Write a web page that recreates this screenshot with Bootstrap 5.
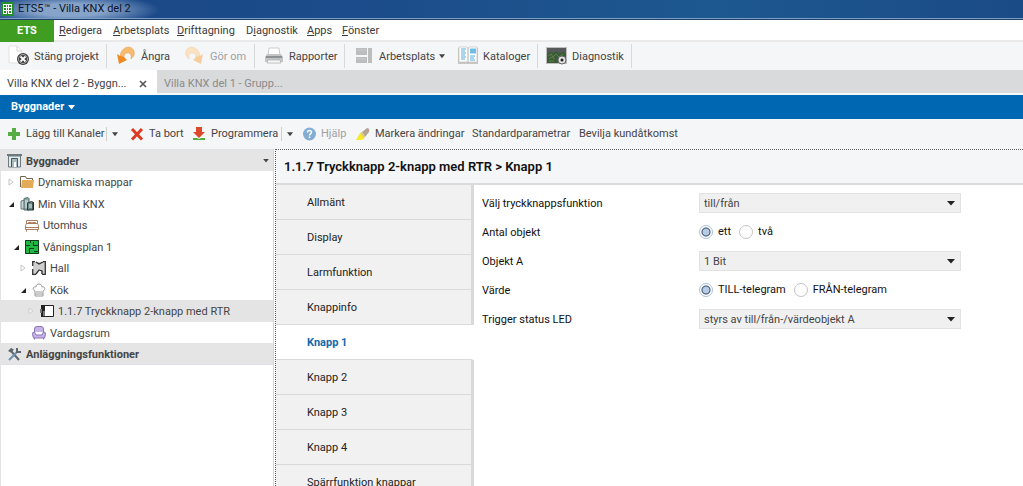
<!DOCTYPE html>
<html lang="sv">
<head>
<meta charset="utf-8">
<meta name="viewport" content="width=device-width, initial-scale=1">
<title>ETS5™ - Villa KNX del 2</title>
<link href="https://cdn.jsdelivr.net/npm/bootstrap@5.3.0/dist/css/bootstrap.min.css" rel="stylesheet">
<style>
  :root { --ets-text: #444; --ets-bar: #f5f6f8; --ets-line: #d9d9d9; }
  body { font-family: Roboto, "Liberation Sans", sans-serif; font-size: 11px; line-height: 16px; color: var(--ets-text); background: #fff; }
  button, select, input { font-family: inherit; }
  svg { display: block; flex: none; }
  a { color: inherit; text-decoration: none; }

  .title-bar { height: 20px; padding: 0 0 1px 1px; gap: 4px; color: #0b1424; background: radial-gradient(ellipse 90px 16px at 70px 10px, #86a3c9 40%, transparent 100%), linear-gradient(90deg, #1b4787 0, #1c4c8b 35%, #1d588f 70%, #1b4b87 100%); border-bottom: 1px solid #1d3f68; box-shadow: inset 0 -1px #7d9fc6; }

  .menu-bar { display: grid; grid-template-columns: 54px 54px 64px 69px 61px 35px auto; height: 20px; }
  .menu-bar > * { padding: 0 5px; line-height: 22px; border: 0; background: none; text-align: left; color: #3a3a3a; white-space: nowrap; }
  .menu-bar .ets-menu { background: #3f9e22; color: #fff; font-weight: 700; text-align: center; }

  .tool { display: flex; align-items: center; height: 100%; border: 0; background: none; color: var(--ets-text); text-align: left; white-space: nowrap; padding: 0 0 0 8px; gap: 4px; }
  .tool:disabled { color: #a0a0a0; }
  .tool-end { border-right: 1px solid var(--ets-line); }
  .main-tools { display: grid; grid-template-columns: 107px 69px 79px 90px 104px 89px 94px; height: 30px; padding: 2px 0; background: var(--ets-bar); border-top: 2px solid #e9e9e9; line-height: 18px; }
  .main-tools .tool { padding-top: 2px; }
  .main-tools .tool svg { margin-top: -2px; }

  .doc-tabs { height: 25px; background: #d9dadc; border-bottom: 2px solid #f4f9fc; }
  .doc-tab { border: 0; background: none; color: #8a8a8a; padding: 2px 10px 0 7px; line-height: 23px; height: 25px; text-align: left; }
  .doc-tab.active { width: 157px; background: #fff; color: #444; }
  .panel-title { height: 24px; background: #0068b2; color: #fff; padding: 0 11px; }
  .panel-title button { border: 0; background: none; color: inherit; padding: 0; gap: 4px; line-height: 26px; height: 24px; font-weight: 700; }

  .action-bar { display: grid; grid-template-columns: 106px 17px 62px 96px 14px 54px 118px 107px auto; height: 30px; padding: 3px 0; background: var(--ets-bar); }
  .action-bar .tool { padding-left: 5px; gap: 5px; height: 24px; }
  .action-bar .split { height: 14px; margin-top: 5px; border-left: 1px solid #cfcfcf; }

  .side-panel { width: 274px; border-left: 1px solid #e4e4e4; border-right: 1px solid #d6d6d6; flex: none; }
  .tree-row { height: 22px; padding-top: 2px; gap: 4px; color: var(--ets-text); }
  .tree-row:nth-child(odd) { height: 21px; }
  .tree-row:first-child { height: 22px; }
  .tree-row svg { margin-top: -2px; }
  .tree-section { background: #e5e5e5; font-weight: 700; padding-left: 6px; padding-right: 4px; }
  .tree-row.selected { background: #e4e4e4; }
  .level-1 { padding-left: 6px; }
  .level-2 { padding-left: 11px; }
  .level-3 { padding-left: 18px; }
  .level-4 { padding-left: 26px; }
  .tree-row > svg + svg { margin-left: 1px; }

  .device-panel { border-left: 1px dotted #555; border-top: 1px dotted #555; margin-left: 1px; min-width: 0; }
  .device-title { height: 35px; background: var(--ets-bar); border-bottom: 2px solid #dadbdd; padding: 0 8px; line-height: 34px; font-size: 13px; font-weight: 600; color: #111; margin: 0; white-space: nowrap; }
  .param-nav { width: 198px; flex: none; }
  .param-nav a { display: block; height: 35px; padding-left: 31px; line-height: 36px; color: #222; background: #f1f1f1; border-right: 3px solid #d9d9da; border-bottom: 1px solid var(--ets-line); }
  .param-nav a.active { background: #fff; border-right-color: #fff; color: #1268ae; font-weight: 700; }

  .param-form { display: grid; grid-template-columns: 217px minmax(0, 262px); grid-auto-rows: 20px; row-gap: 9px; padding: 8px; align-content: start; color: #111; }
  .param-form .name { line-height: 22px; }
  .param-form .form-select { height: 20px; padding: 1px 24px 0 4px; border: 1px solid #e2e2e2; border-radius: 0; font-size: 11px; line-height: 18px; color: #444; background: #f0f0f0 url("data:image/svg+xml,%3Csvg xmlns='http://www.w3.org/2000/svg' width='8' height='5'%3E%3Cpath d='M0 0h8L4 4.500z' fill='%23222'/%3E%3C/svg%3E") no-repeat right 5px center / 8px 5px; }
  .choices { display: flex; align-items: center; gap: 8px; }
  .choices label { display: flex; align-items: center; gap: 5px; line-height: 22px; height: 20px; }
  .choices input { appearance: none; width: 14px; height: 14px; margin: 0; border: 1px solid #c4c4c4; border-radius: 50%; background: #fff; }
  .choices input:checked { border-color: #a9bfd8; background: radial-gradient(circle, #b5cbe6 0 3px, #3a5069 4px, #fff 5px); }
</style>
</head>
<body>
<svg class="d-none" aria-hidden="true">
  <symbol id="caret" viewBox="0 0 7 5"><path d="M0 0h7L3.500 4.500z" fill="currentColor"/></symbol>
  <symbol id="closed" viewBox="0 0 8 8"><path d="M2 1l4 3-4 3z" fill="#fff" stroke="#c4c4c4"/></symbol>
  <symbol id="open" viewBox="0 0 8 8"><path d="M7 2v5H2z" fill="#222"/></symbol>
</svg>

<div class="vh-100 overflow-hidden d-flex flex-column">
  <header>
    <div class="title-bar d-flex align-items-center">
      <svg width="13" height="16" viewBox="0 0 13 16"><path d="M0 1h13v14H0z" fill="#23902d"/><path d="M2 3h9v10H2z" fill="#fff"/><path d="M3 4h2v2H3zM6 4h1v2H6zM8 4h2v2H8zM3 7h2v2H3zM6 7h1v2H6zM8 7h2v2H8zM3 10h2v2H3zM6 10h1v3H6zM8 10h2v2H8z" fill="#23902d"/></svg>
      <span>ETS5™ - Villa KNX del 2</span>
    </div>
    <nav class="menu-bar">
      <button type="button" class="ets-menu">ETS</button>
      <a href="#"><u>R</u>edigera</a><a href="#"><u>A</u>rbetsplats</a><a href="#"><u>D</u>rifttagning</a><a href="#">D<u>i</u>agnostik</a><a href="#"><u>A</u>pps</a><a href="#"><u>F</u>önster</a>
    </nav>
    <div class="main-tools" role="toolbar">
      <button type="button" class="tool tool-end">
        <svg width="22" height="22" viewBox="0 0 22 22"><path d="M1 1h8l5 5v12H1z" fill="#fff" stroke="#e2e2e2"/><path d="M9 1v5h5" fill="none" stroke="#d5d5d5"/><circle cx="15" cy="14" r="6" fill="#3d3d3d"/><circle cx="15" cy="14" r="4.500" fill="none" stroke="#aaa"/><path d="M12.500 11.500l5 5m0-5l-5 5" stroke="#fff" stroke-width="1.800"/></svg>
        Stäng projekt</button>
      <button type="button" class="tool">
        <svg width="22" height="22" viewBox="0 0 22 22"><path d="M5 11C6 5 10 2 14 2c4 1 6 4 5 8-1 2-2 3-3 4 1-4-1-7-4-6-2 0-3 2-3 4z" fill="#f7bb6b" stroke="#e3a055" stroke-width=".6"/><path d="M2 9l3 2 4 1 3 3-8 4z" fill="#ee8a24"/></svg>
        Ångra</button>
      <button type="button" class="tool tool-end" disabled>
        <svg width="22" height="22" viewBox="0 0 22 22"><g transform="matrix(-1 0 0 1 21 0)"><path d="M5 11C6 5 10 2 14 2c4 1 6 4 5 8-1 2-2 3-3 4 1-4-1-7-4-6-2 0-3 2-3 4z" fill="#fae1c0" stroke="#efd2ae" stroke-width=".6"/><path d="M2 9l3 2 4 1 3 3-8 4z" fill="#f6cd9d"/></g></svg>
        Gör om</button>
      <button type="button" class="tool tool-end">
        <svg width="22" height="22" viewBox="0 0 22 22"><path d="M6 3h10l1 8H5z" fill="#fff" stroke="#ccc"/><path d="M4 9h14l2 3v5H2v-5z" fill="#c3c5c7"/><path d="M3 11h16v2H3z" fill="#8e9194"/><path d="M5 15h12l1 3H4z" fill="#f7f7f7" stroke="#aaa" stroke-width=".7"/></svg>
        Rapporter</button>
      <button type="button" class="tool">
        <svg width="22" height="22" viewBox="0 0 22 22"><path d="M3 3h11v7H3zM3 12h11v6H3zM15 3h4v15h-4z" fill="#bdbdbd"/><path d="M4 5h9M4 14h9" stroke="#ccc"/></svg>
        Arbetsplats<svg width="6" height="5"><use href="#caret"/></svg></button>
      <button type="button" class="tool tool-end">
        <svg width="22" height="22" viewBox="0 0 22 22"><path d="M1 3h20v16H1z" fill="#c8c8c4"/><path d="M2 2h8l1 1 1-1h8v15h-8l-1 1-1-1H2z" fill="#fff" stroke="#b9b9b9" stroke-width=".6"/><path d="M11 3v15" stroke="#aaa"/><path d="M4 4h5M4 6h4M4 8h5M4 10h4M4 12h5M4 14h4M13 11h5M13 13h4M13 15h5" stroke="#53aada"/><path d="M13 3.500h6v5h-6z" fill="#70bde8"/></svg>
        Kataloger</button>
      <button type="button" class="tool tool-end">
        <svg width="22" height="22" viewBox="0 0 22 22"><path d="M0 2h21v17H0z" fill="#bdbdbd"/><path d="M1 3h19v15H1z" fill="#55595a"/><path d="M1 9l3-2 3 1 3-2 4 2 3-1 3 1v10H1z" fill="#3c5c35"/><path d="M2 11l3-2 2 3 3-3 3 3 4-3M3 14l3-2 3 2M3 16h5" fill="none" stroke="#6b8a5c" stroke-width=".7"/><circle cx="16" cy="15" r="4" fill="#e2e2e2" stroke="#666"/><circle cx="16" cy="15" r="1.500" fill="#222"/></svg>
        Diagnostik</button>
    </div>
    <div class="doc-tabs d-flex">
      <div class="doc-tab active d-flex align-items-center justify-content-between"><span>Villa KNX del 2 - Byggn...</span>
        <button type="button" class="border-0 bg-transparent p-0" aria-label="Stäng flik"><svg width="8" height="8" viewBox="0 0 8 8"><path d="M1 1l6 6m0-6L1 7" stroke="#555" stroke-width="1.600"/></svg></button></div>
      <button type="button" class="doc-tab">Villa KNX del 1 - Grupp...</button>
    </div>
    <div class="panel-title"><button type="button" class="d-flex align-items-center">Byggnader <svg width="7" height="5"><use href="#caret"/></svg></button></div>
    <div class="action-bar" role="toolbar">
      <button type="button" class="tool"><svg width="16" height="16" viewBox="0 0 16 16"><path d="M7 2h4v4h4v4h-4v4H7v-4H3V6h4z" fill="#55ad43"/></svg>Lägg till Kanaler</button>
      <button type="button" class="tool split" aria-label="Fler kanalval"><svg width="6" height="5"><use href="#caret"/></svg></button>
      <button type="button" class="tool"><svg width="16" height="16" viewBox="0 0 16 16"><path d="M4 3l10 10.500M14 3L4 13.500" stroke="#dc3a23" stroke-width="3"/></svg>Ta bort</button>
      <button type="button" class="tool"><svg width="16" height="16" viewBox="0 0 16 16"><path d="M6 1h6v5h3l-6 6-6-6h3z" fill="#dc4a2b"/><path d="M3 12h4l2 1 2-1h4v2H3z" fill="#54ae3b"/></svg>Programmera</button>
      <button type="button" class="tool split" aria-label="Fler programmeringsval"><svg width="6" height="5"><use href="#caret"/></svg></button>
      <button type="button" class="tool" disabled><svg width="16" height="16" viewBox="0 0 16 16"><circle cx="9.500" cy="8" r="6.500" fill="#84add4"/><path d="M7.500 6.500c0-3 4.500-2.500 4 0-.2 1.200-2 1.300-2 3m0 1v1.500" fill="none" stroke="#fff" stroke-width="1.500"/></svg>Hjälp</button>
      <button type="button" class="tool"><svg width="16" height="16" viewBox="0 0 16 16"><path d="M8 6l5-4q3 0 2 4l-4 5z" fill="#b2a596"/><path d="M6 7l2-1 3 5-2 2z" fill="#dfcf68"/><path d="M2 14l4-7 4 6-3 1z" fill="#f6ea28"/></svg>Markera ändringar</button>
      <button type="button" class="tool">Standardparametrar</button>
      <button type="button" class="tool">Bevilja kundåtkomst</button>
    </div>
  </header>

  <main class="d-flex flex-grow-1 overflow-hidden">
    <aside class="side-panel" role="tree">
      <div class="tree-row tree-section d-flex align-items-center border-top">
        <svg width="15" height="15" viewBox="0 0 15 15"><path d="M0 1h15v2H0z" fill="#6c7a80"/><path d="M1.500 3h12v11h-12z" fill="#e3ebed" stroke="#6c7a80"/><path d="M4.500 14V5.500h6V14" fill="#a9bbc1" stroke="#46545b"/><path d="M7 9h2v5H7z" fill="#fff"/></svg>
        <span class="flex-grow-1">Byggnader</span><svg width="6" height="4"><use href="#caret"/></svg></div>
      <div class="tree-row level-1 d-flex align-items-center" role="treeitem"><svg width="8" height="8"><use href="#closed"/></svg>
        <svg width="14" height="14" viewBox="0 0 14 14"><path d="M.5 12V1.500h5l1 2h6v3" fill="#fff" stroke="#77634c"/><path d="M2 5h12l-1 8H1z" fill="#e3ac59"/></svg>Dynamiska mappar</div>
      <div class="tree-row level-1 d-flex align-items-center" role="treeitem"><svg width="8" height="8"><use href="#open"/></svg>
        <svg width="14" height="14" viewBox="0 0 14 14"><path d="M1 4l4-1v9H1z" fill="#c4d6d4" stroke="#68787a"/><path d="M4 1.500l4-1 1 1V13H4z" fill="#8eaaa8" stroke="#56686a"/><path d="M7.500 6l4-1.500 2 1V13h-6z" fill="#6b8886" stroke="#26383a"/><path d="M5 4h3M5 6h2M5 8h2M5 10h2M9 8h3M9 10h3" stroke="#e3eeee"/><path d="M13 5v8" stroke="#222"/></svg>Min Villa KNX</div>
      <div class="tree-row level-2 d-flex align-items-center" role="treeitem"><svg width="8" height="8"></svg>
        <svg width="14" height="14" viewBox="0 0 14 14"><path d="M1.500 6V2.500h11V6M.5 7.500l1-2h11l1 2v4H.5zM.5 9.500h13M3.500 5V4.500h3V5M7.500 5V4.500h3V5M1.500 12v1.500M12.500 12v1.500" fill="none" stroke="#b07a5c"/></svg>Utomhus</div>
      <div class="tree-row level-2 d-flex align-items-center" role="treeitem"><svg width="8" height="8"><use href="#open"/></svg>
        <svg width="14" height="14" viewBox="0 0 14 14"><path d="M0 0h14v14H0z" fill="#20b745"/><path d="M.5.500h13v13H.5zM0 5.500h5M5.500 0v3M8.500 2v4M8 5.500h6M4.500 8v6M4 8.500h5M9 11.500h5" fill="none" stroke="#0a3d1a"/></svg>Våningsplan 1</div>
      <div class="tree-row level-3 d-flex align-items-center" role="treeitem"><svg width="8" height="8"><use href="#closed"/></svg>
        <svg width="14" height="14" viewBox="0 0 14 14"><path d="M1 1h12v12H9V9L7 8l-3 5H1z" fill="#cfcfcf"/><path d="M.7 5V.7H3M11 .7h2.300V13.300H10M.7 8v5.300H4M4 13l3-4 3 1v3M4 1l3 2 4-2" fill="none" stroke="#333" stroke-width="1.300"/></svg>Hall</div>
      <div class="tree-row level-3 d-flex align-items-center" role="treeitem"><svg width="8" height="8"><use href="#open"/></svg>
        <svg width="14" height="14" viewBox="0 0 14 14"><path d="M3 13V8C0 7 1 3 4 4c0-4 6-4 6 0 3-1 4 3 1 4v5zM3 11h8M5 8v2M7 8v2M9 8v2" fill="#fff" stroke="#999"/></svg>Kök</div>
      <div class="tree-row level-4 selected d-flex align-items-center" role="treeitem"><svg width="8" height="8" opacity=".6"><use href="#closed"/></svg>
        <svg width="14" height="14" viewBox="0 0 14 14"><path d="M1.500 1.500h12v11h-12z" fill="#fff" stroke="#222"/><path d="M1 1h4v12H1z" fill="#222"/><path d="M0 5h2v4H0zM3 7h2v5H3z" fill="#777"/></svg>1.1.7 Tryckknapp 2-knapp med RTR</div>
      <div class="tree-row level-3 d-flex align-items-center" role="treeitem"><svg width="8" height="8"></svg>
        <svg width="14" height="14" viewBox="0 0 14 14"><path d="M2.500 6V3q0-2.500 2.500-2.500h4q2.500 0 2.500 2.500v3q2.500 0 2 2.500l-1 3.500h-11l-1-3.500Q0 6 2.500 6zM2.500 6l1.500 3h6l1.500-3M2.500 12v1.500M11.500 12v1.500" fill="#c5b2e6" stroke="#8a74b4"/></svg>Vardagsrum</div>
      <div class="tree-row tree-section d-flex align-items-center border-bottom">
        <svg width="15" height="14" viewBox="0 0 15 14"><path d="M4 4l8 9" stroke="#5d6570" stroke-width="2"/><path d="M1 4l3-3 3 1.500-3 3z" fill="#5d6570"/><path d="M2 13l8-8" stroke="#6e8fb0" stroke-width="2"/><path d="M10 1v4h4" fill="none" stroke="#5d6570" stroke-width="2"/></svg>
        <span>Anläggningsfunktioner</span></div>
    </aside>

    <section class="device-panel flex-grow-1 d-flex flex-column">
      <h1 class="device-title">1.1.7 Tryckknapp 2-knapp med RTR &gt; Knapp 1</h1>
      <div class="d-flex flex-grow-1">
        <nav class="param-nav">
          <a href="#">Allmänt</a><a href="#">Display</a><a href="#">Larmfunktion</a><a href="#">Knappinfo</a><a href="#" class="active" aria-current="page">Knapp 1</a><a href="#">Knapp 2</a><a href="#">Knapp 3</a><a href="#">Knapp 4</a><a href="#">Spärrfunktion knappar</a>
        </nav>
        <form class="param-form flex-grow-1">
          <label class="name" for="func">Välj tryckknappsfunktion</label>
          <select class="form-select" id="func"><option>till/från</option></select>
          <span class="name" id="count">Antal objekt</span>
          <div class="choices" role="radiogroup" aria-labelledby="count">
            <label><input type="radio" name="count" checked>ett</label>
            <label><input type="radio" name="count">två</label>
          </div>
          <label class="name" for="obj">Objekt A</label>
          <select class="form-select" id="obj"><option>1 Bit</option></select>
          <span class="name" id="value">Värde</span>
          <div class="choices" role="radiogroup" aria-labelledby="value">
            <label><input type="radio" name="value" checked>TILL-telegram</label>
            <label><input type="radio" name="value">FRÅN-telegram</label>
          </div>
          <label class="name" for="led">Trigger status LED</label>
          <select class="form-select" id="led"><option>styrs av till/från-/värdeobjekt A</option></select>
        </form>
      </div>
    </section>
  </main>
</div>
<script src="https://cdn.jsdelivr.net/npm/bootstrap@5.3.0/dist/js/bootstrap.bundle.min.js"></script>
</body>
</html>
